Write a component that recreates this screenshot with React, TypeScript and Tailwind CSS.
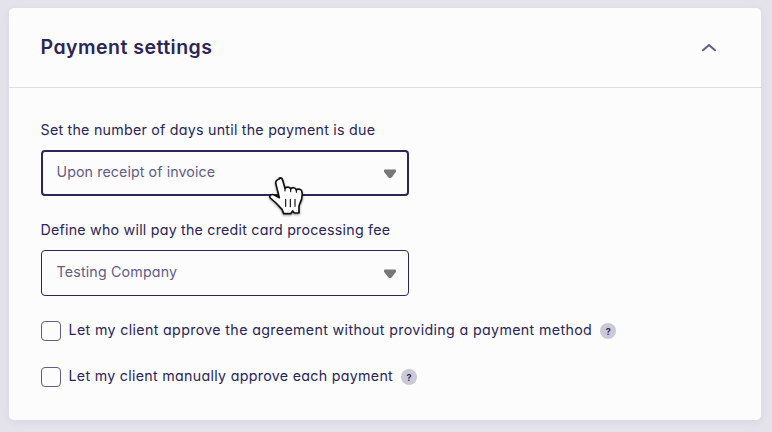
import type { ReactNode } from 'react';

function SelectField({ label, value, focused, labelTracking, valueTracking }: { label: string; value: string; focused?: boolean; labelTracking: string; valueTracking: string }) {
  return (
    <div className="flex w-[368px] flex-col">
      <label className={`-ml-[0.5px] h-5 text-[14.25px] leading-5 whitespace-nowrap ${labelTracking}`}>{label}</label>
      <div
        className={`mt-[10px] flex h-[46px] items-center justify-between rounded-[4px] border-[#2b2558] ${
          focused ? 'border-2 pr-[10px] pl-[13.5px]' : 'border pr-[11px] pl-[14.5px]'
        }`}
      >
        <span className={`-mt-[3px] text-[14.25px] leading-5 whitespace-nowrap text-[#625c86] ${valueTracking}`}>{value}</span>
        <svg className="mt-px h-[10px] w-[14px]" viewBox="0 0 14 10" fill="#777777">
          <path d="M1.8 .5h10.4q.8 0 .8 1v1.2L8.8 8.2Q7 10 5.2 8.2L1 2.7V1.5q0-1 .8-1Z" />
        </svg>
      </div>
    </div>
  );
}

function CheckRow({ children, tracking }: { children: ReactNode; tracking: string }) {
  return (
    <div className="flex h-5 items-center">
      <span className="h-5 w-5 shrink-0 rounded-[4px] border border-[#625c86]" />
      <span className={`-mt-0.5 ml-[7.5px] text-[14.25px] leading-5 whitespace-nowrap ${tracking}`}>{children}</span>
      <span className="ml-2 flex h-4 w-4 shrink-0 items-center justify-center rounded-full bg-[#cbc9d8] text-[9px] leading-none font-bold">
        ?
      </span>
    </div>
  );
}

function HandCursor() {
  return (
    <svg className="pointer-events-none absolute top-[170px] left-[262px] h-[50px] w-[50px] drop-shadow-[0_1px_1px_rgba(0,0,0,0.4)]" viewBox="0 0 150 150">
      <path
        d="M52 24c5-1 9 2 10 7l7 24c3-5 15-5 17 2 4-6 15-5 17 3 5-5 16-3 17 6 2 15-1 26-7 36l-2 7v20H97l-5-6-6 8H65l-5-13-18-19-17-15c-5-7 3-13 12-9l15 8-10-40c-3-9 3-15 10-16Z"
        fill="#fff"
        stroke="#111"
        strokeWidth="5"
        strokeLinejoin="round"
      />
      <path d="M69 55v8M86 58v7M103 61v6M71 88v21M85 88v22M99 88v21" stroke="#111" strokeWidth="3.5" strokeLinecap="round" />
    </svg>
  );
}

export default function App() {
  return (
    <div className="relative h-[432px] w-[772px] overflow-hidden bg-[#e4e3eb] pt-2 pl-[9px] font-['Inter',sans-serif] text-[#2b2558] [font-feature-settings:'cv11']">
      <section className="h-[412px] w-[752px] rounded-[5px] bg-[#fcfcfd] shadow-[0_2px_9px_rgba(75,70,125,0.07)]">
        <header className="flex h-20 items-center justify-between border-b border-[#dfdee8] pr-11 pl-8">
          <h1 className="-mt-0.5 -ml-[0.5px] text-[19.5px] leading-7 font-semibold tracking-[0.48px]">Payment settings</h1>
          <svg className="h-[9px] w-4" viewBox="0 0 16 9" fill="none" stroke="#625c86" strokeWidth="2" strokeLinecap="round" strokeLinejoin="round">
            <path d="M2 7.3 8 2l6 5.3" />
          </svg>
        </header>
        <div className="flex flex-col px-8 pt-8">
          <SelectField focused label="Set the number of days until the payment is due" value="Upon receipt of invoice" labelTracking="tracking-[0.235px]" valueTracking="tracking-[0.08px]" />
          <div className="mt-6">
            <SelectField label="Define who will pay the credit card processing fee" value="Testing Company" labelTracking="tracking-[0.22px]" valueTracking="tracking-[0.16px]" />
          </div>
          <div className="mt-[25px] flex flex-col gap-[26px]">
            <CheckRow tracking="tracking-[0.34px]">Let my client approve the agreement without providing a payment method</CheckRow>
            <CheckRow tracking="tracking-[0.29px]">Let my client manually approve each payment</CheckRow>
          </div>
        </div>
      </section>
      <HandCursor />
    </div>
  );
}
